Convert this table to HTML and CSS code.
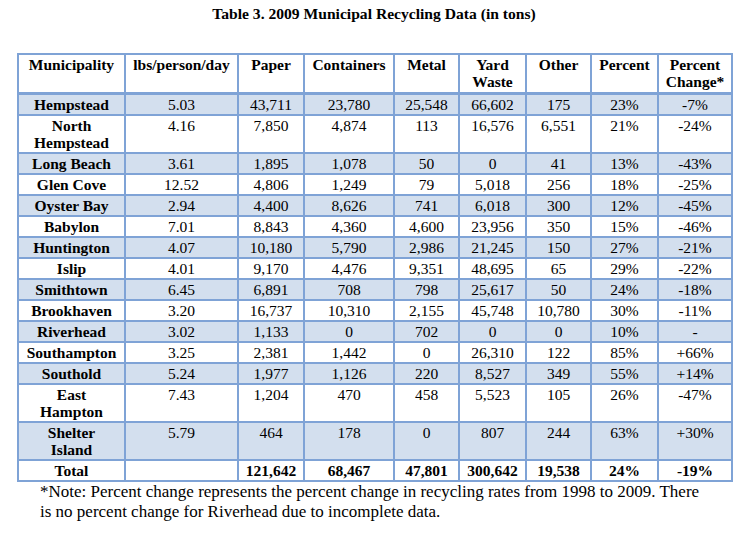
FILE: index.html
```html
<!DOCTYPE html>
<html>
<head>
<meta charset="utf-8">
<link rel="stylesheet" href="styles.css">
</head>
<body>
<div class="page">
  <h1 class="title">Table 3. 2009 Municipal Recycling Data (in tons)</h1>
  <table class="data">
    <colgroup>
      <col class="c1"><col class="c2"><col class="c3"><col class="c4"><col class="c5"><col class="c6"><col class="c7"><col class="c8"><col class="c9">
    </colgroup>
    <thead>
      <tr class="head">
        <th>Municipality</th><th>lbs/person/day</th><th>Paper</th><th>Containers</th><th>Metal</th><th>Yard<br>Waste</th><th>Other</th><th>Percent</th><th>Percent<br>Change*</th>
      </tr>
    </thead>
    <tbody>
      <tr class="shade"><th>Hempstead</th><td>5.03</td><td>43,711</td><td>23,780</td><td>25,548</td><td>66,602</td><td>175</td><td>23%</td><td>-7%</td></tr>
      <tr><th>North<br>Hempstead</th><td>4.16</td><td>7,850</td><td>4,874</td><td>113</td><td>16,576</td><td>6,551</td><td>21%</td><td>-24%</td></tr>
      <tr class="shade"><th>Long Beach</th><td>3.61</td><td>1,895</td><td>1,078</td><td>50</td><td>0</td><td>41</td><td>13%</td><td>-43%</td></tr>
      <tr><th>Glen Cove</th><td>12.52</td><td>4,806</td><td>1,249</td><td>79</td><td>5,018</td><td>256</td><td>18%</td><td>-25%</td></tr>
      <tr class="shade"><th>Oyster Bay</th><td>2.94</td><td>4,400</td><td>8,626</td><td>741</td><td>6,018</td><td>300</td><td>12%</td><td>-45%</td></tr>
      <tr><th>Babylon</th><td>7.01</td><td>8,843</td><td>4,360</td><td>4,600</td><td>23,956</td><td>350</td><td>15%</td><td>-46%</td></tr>
      <tr class="shade"><th>Huntington</th><td>4.07</td><td>10,180</td><td>5,790</td><td>2,986</td><td>21,245</td><td>150</td><td>27%</td><td>-21%</td></tr>
      <tr><th>Islip</th><td>4.01</td><td>9,170</td><td>4,476</td><td>9,351</td><td>48,695</td><td>65</td><td>29%</td><td>-22%</td></tr>
      <tr class="shade"><th>Smithtown</th><td>6.45</td><td>6,891</td><td>708</td><td>798</td><td>25,617</td><td>50</td><td>24%</td><td>-18%</td></tr>
      <tr><th>Brookhaven</th><td>3.20</td><td>16,737</td><td>10,310</td><td>2,155</td><td>45,748</td><td>10,780</td><td>30%</td><td>-11%</td></tr>
      <tr class="shade"><th>Riverhead</th><td>3.02</td><td>1,133</td><td>0</td><td>702</td><td>0</td><td>0</td><td>10%</td><td>-</td></tr>
      <tr><th>Southampton</th><td>3.25</td><td>2,381</td><td>1,442</td><td>0</td><td>26,310</td><td>122</td><td>85%</td><td>+66%</td></tr>
      <tr class="shade"><th>Southold</th><td>5.24</td><td>1,977</td><td>1,126</td><td>220</td><td>8,527</td><td>349</td><td>55%</td><td>+14%</td></tr>
      <tr><th>East<br>Hampton</th><td>7.43</td><td>1,204</td><td>470</td><td>458</td><td>5,523</td><td>105</td><td>26%</td><td>-47%</td></tr>
      <tr class="shade"><th>Shelter<br>Island</th><td>5.79</td><td>464</td><td>178</td><td>0</td><td>807</td><td>244</td><td>63%</td><td>+30%</td></tr>
      <tr class="total"><th>Total</th><td></td><td>121,642</td><td>68,467</td><td>47,801</td><td>300,642</td><td>19,538</td><td>24%</td><td>-19%</td></tr>
    </tbody>
  </table>
  <p class="note">*Note: Percent change represents the percent change in recycling rates from 1998 to 2009. There is no percent change for Riverhead due to incomplete data.</p>
</div>
</body>
</html>
```

FILE: styles.css
```css
html, body {
  margin: 0;
  padding: 0;
  background: #ffffff;
}

.page {
  width: 748px;
  font-family: "Liberation Serif", "Times New Roman", serif;
  color: #000000;
  padding-top: 5px;
}

.title {
  margin: 0 0 30px 0;
  font-size: 15.6px;
  line-height: 18px;
  font-weight: bold;
  text-align: center;
}

.data {
  margin-left: 17px;
  width: 716px;
  table-layout: fixed;
  border-collapse: collapse;
  border: 2px solid #7fa3d6;
  font-family: "Liberation Serif", "Times New Roman", serif;
  font-size: 15.5px;
  line-height: 17px;
}

.c1 { width: 107px; }
.c2 { width: 113px; }
.c3 { width: 66px; }
.c4 { width: 90px; }
.c5 { width: 65px; }
.c6 { width: 67px; }
.c7 { width: 65px; }
.c8 { width: 67px; }
.c9 { width: 74px; }

.data th,
.data td {
  border: 2px solid #7fa3d6;
  padding: 1px 2px 1px 2px;
  text-align: center;
  vertical-align: top;
  white-space: nowrap;
}

.data th {
  font-weight: bold;
}

.data td {
  font-weight: normal;
}

.head th {
  padding-top: 1px;
  padding-bottom: 2px;
  border-bottom-width: 3px;
}

.shade th,
.shade td {
  background: #d3dfee;
}

.total td {
  font-weight: bold;
}

.note {
  margin: 0;
  padding-left: 40px;
  width: 670px;
  font-size: 17px;
  line-height: 20px;
}
```
